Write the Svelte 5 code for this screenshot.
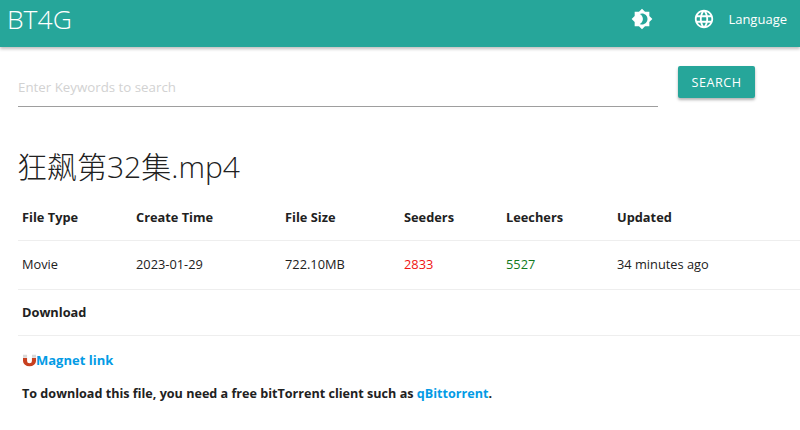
<script>
  const cols = [
    { head: 'File Type', val: 'Movie', w: 114 },
    { head: 'Create Time', val: '2023-01-29', w: 149 },
    { head: 'File Size', val: '722.10MB', w: 119 },
    { head: 'Seeders', val: '2833', w: 102, cls: 'red' },
    { head: 'Leechers', val: '5527', w: 111, cls: 'green' },
    { head: 'Updated', val: '34 minutes ago', w: 183 }
  ];
</script>

<header class="nav">
  <span class="logo">BT4G</span>
  <div class="nav-right">
    <svg class="icon theme" viewBox="0 0 24 24" width="24" height="24"><path fill="#fff" d="M20 15.31 23.31 12 20 8.69V4h-4.69L12 .69 8.69 4H4v4.69L.69 12 4 15.31V20h4.69L12 23.31 15.31 20H20v-4.69zM12 18c-.89 0-1.74-.2-2.5-.55C11.56 16.5 13 14.42 13 12s-1.44-4.5-3.5-5.45C10.26 6.2 11.11 6 12 6c3.31 0 6 2.69 6 6s-2.69 6-6 6z"/></svg>
    <svg class="icon globe" viewBox="0 0 24 24" width="24" height="24"><path fill="#fff" d="M11.99 2C6.47 2 2 6.48 2 12s4.47 10 9.99 10C17.52 22 22 17.52 22 12S17.52 2 11.99 2zm6.93 6h-2.95c-.32-1.25-.78-2.45-1.38-3.56 1.84.63 3.37 1.91 4.33 3.56zM12 4.04c.83 1.2 1.48 2.53 1.91 3.96h-3.82c.43-1.43 1.08-2.76 1.91-3.96zM4.26 14C4.1 13.36 4 12.69 4 12s.1-1.36.26-2h3.38c-.08.66-.14 1.32-.14 2s.06 1.34.14 2H4.26zm.82 2h2.95c.32 1.25.78 2.45 1.38 3.56-1.84-.63-3.37-1.9-4.33-3.56zm2.95-8H5.08c.96-1.66 2.49-2.93 4.33-3.56C8.81 5.55 8.35 6.75 8.03 8zM12 19.96c-.83-1.2-1.48-2.53-1.91-3.96h3.82c-.43 1.43-1.08 2.76-1.91 3.96zM14.34 14H9.66c-.09-.66-.16-1.32-.16-2s.07-1.35.16-2h4.68c.09.65.16 1.32.16 2s-.07 1.34-.16 2zm.25 5.56c.6-1.11 1.06-2.31 1.38-3.56h2.95c-.96 1.65-2.49 2.93-4.33 3.56zM16.36 14c.08-.66.14-1.32.14-2s-.06-1.34-.14-2h3.38c.16.64.26 1.31.26 2s-.1 1.36-.26 2h-3.38z"/></svg>
    <span class="lang">Language</span>
  </div>
</header>

<form class="search" onsubmit={(e) => e.preventDefault()}>
  <input type="text" placeholder="Enter Keywords to search" />
  <button type="submit">SEARCH</button>
</form>

<main>
  <h1>狂飙第32集.mp4</h1>
  <div class="table">
    <div class="row head">
      {#each cols as c}<div class="cell" style="width:{c.w}px">{c.head}</div>{/each}
    </div>
    <div class="row vals">
      {#each cols as c}<div class="cell {c.cls ?? ''}" style="width:{c.w}px">{c.val}</div>{/each}
    </div>
    <div class="row dl"><div class="cell">Download</div></div>
  </div>
  <p class="magnet">
    <svg viewBox="0 0 16 14" width="13" height="13"><path fill="#c8401f" d="M0 4h5v3.5a3 3 0 0 0 6 0V4h5v3.5a8 6.5 0 0 1-16 0z"/><path fill="#d8d8d8" d="M0 0h5v3.5H0zM11 0h5v3.5h-5z"/></svg><a href="#m">Magnet link</a>
  </p>
  <p class="note">To download this file, you need a free bitTorrent client such as <a href="#q">qBittorrent</a>.</p>
</main>

<style>
  :global(body) { margin: 0; background: #fff; font-family: "Open Sans", "Noto Sans CJK SC", sans-serif; color: #212121; }
  .nav { height: 47px; background: #26a69a; display: flex; align-items: center; justify-content: space-between; box-shadow: 0 2px 3px rgba(0,0,0,.25); color: #fff; padding: 0 13px 8px 7px; box-sizing: border-box; }
  .logo { font-size: 26.5px; font-weight: 300; line-height: 1; }
  .nav-right { display: flex; align-items: center; padding-bottom: 2px; }
  .icon { display: block; }
  .theme { width: 22px; height: 22px; margin-right: 40px; }
  .globe { width: 22px; height: 22px; margin-right: 13px; }
  .lang { font-size: 13px; }
  .search { display: flex; align-items: flex-start; padding: 19px 45px 0 18px; gap: 20px; }
  input { width: 640px; height: 38px; border: 0; border-bottom: 1px solid #9e9e9e; outline: 0; padding: 2px 0 0; font: 13.3px "Open Sans", sans-serif; background: none; box-sizing: content-box; }
  input::placeholder { color: #d2d2d2; opacity: 1; }
  button { width: 77px; height: 32px; border: 0; border-radius: 2px; background: #26a69a; color: #fff; font: 12.6px "Open Sans", sans-serif; letter-spacing: .5px; box-shadow: 0 2px 3px rgba(0,0,0,.3); padding: 0; }
  main { padding: 0 0 0 18px; }
  h1 { margin: 40px 0 7px -1px; font-size: 30px; font-weight: 300; line-height: 40px; }
  .row { display: flex; border-bottom: 1px solid #eee; font-size: 12.8px; }
  .cell { padding-left: 4px; box-sizing: border-box; flex: none; }
  .head { height: 46px; font-weight: 700; align-items: center; }
  .vals { height: 46px; padding-bottom: 2px; align-items: center; }
  .dl { height: 44px; padding-bottom: 1px; font-weight: 700; align-items: center; }
  .red { color: #f01414; }
  .green { color: #117a1e; }
  .magnet { margin: 15px 0 0 5px; font-size: 13px; font-weight: 700; display: flex; align-items: center; line-height: 18px; }
  .note { margin: 16px 0 0 4px; font-size: 12.6px; font-weight: 700; line-height: 18px; }
  a { color: #039be5; text-decoration: none; }
</style>
